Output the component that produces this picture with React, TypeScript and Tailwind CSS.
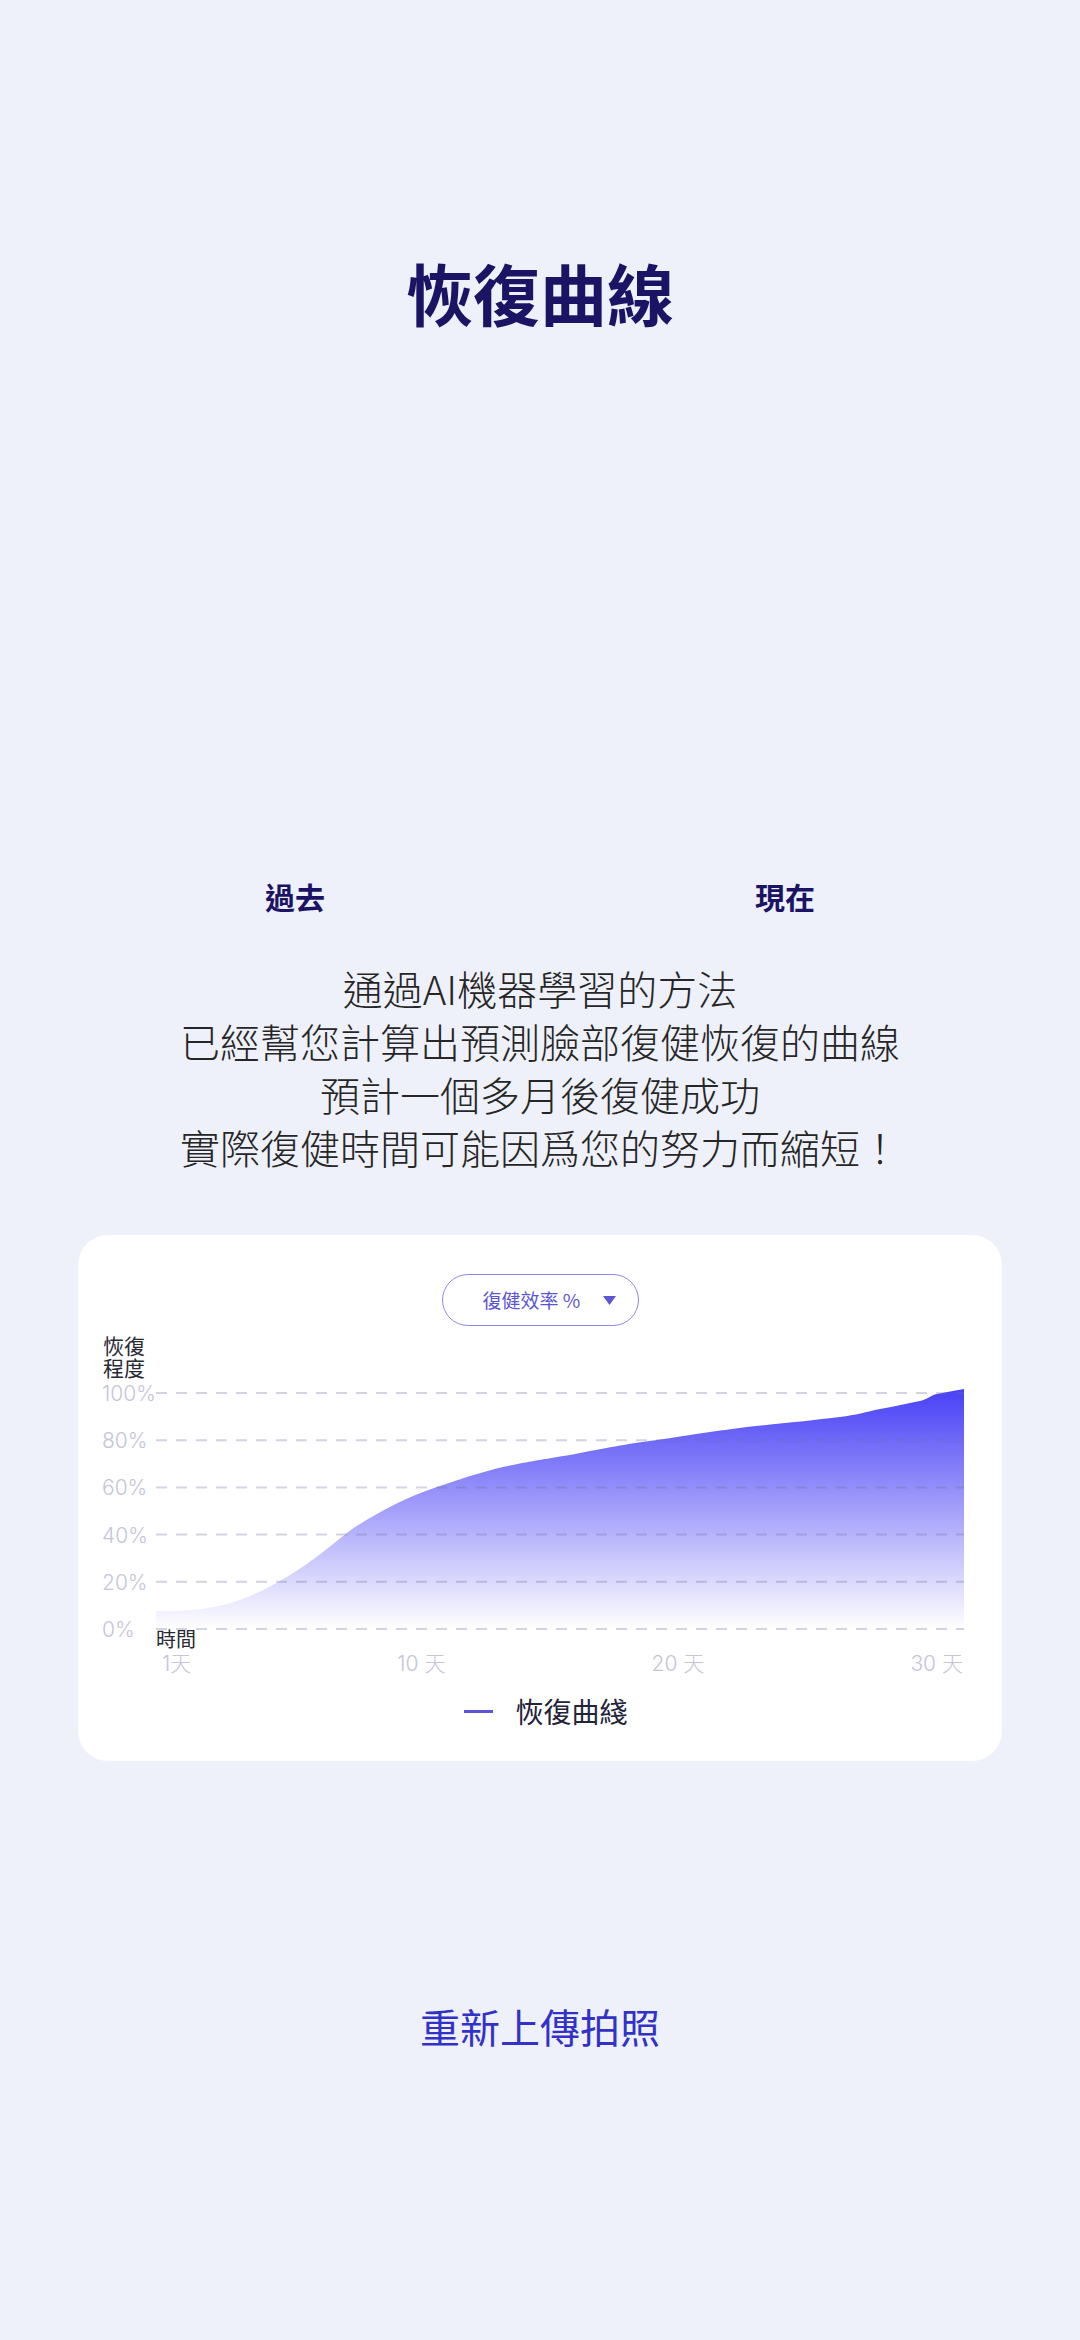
const cjk = "font-['Noto_Sans_CJK_TC','Noto_Sans',sans-serif]";
const latin = "font-['Inter','Noto_Sans_CJK_TC',sans-serif]";

const yLabels = ["100%", "80%", "60%", "40%", "20%", "0%"];
const xLabels = ["1天", "10 天", "20 天", "30 天"];

const areaPath =
  "M0 218 C30 218 55 217 81 208 C110 198 140 180 167 159 C185 145 195 136 204 131 C225 118 250 104 281 94 C310 84 330 78 347 74 C370 69 384 67 414 62 C450 55 470 51 501 47 C540 41 560 38 591 34 C630 30 650 28 684 24 C700 22 710 19 724 16 C740 13 750 11 764 8 C772 6 775 2 781 1 C790 -1 798 -2 808 -4 L808 236 L0 236 Z";

const RecoveryChart = () => {
  return (
    <div className="relative ml-[53px] h-[236px] w-[808px]">
      {yLabels.map((label, index) => (
        <span
          key={label}
          className={`absolute left-[-54px] -translate-y-1/2 text-[21px] leading-[22px] font-light text-[#c6c4d9] ${latin}`}
          style={{ top: `${index * 47.2 + 1}px` }}
        >
          {label}
        </span>
      ))}
      <svg width="808" height="236" viewBox="0 0 808 236" className="overflow-visible">
        <defs>
          <linearGradient id="fill" x1="0" y1="-4" x2="0" y2="236" gradientUnits="userSpaceOnUse">
            <stop offset="0" stopColor="#4840f6" />
            <stop offset="1" stopColor="#ffffff" />
          </linearGradient>
        </defs>
        <path d={areaPath} fill="url(#fill)" />
        {yLabels.map((_, index) => (
          <line
            key={index}
            x1="0"
            x2="808"
            y1={index * 47.2}
            y2={index * 47.2}
            stroke="rgba(110,108,160,0.3)"
            strokeWidth="2"
            strokeDasharray="11 9"
          />
        ))}
      </svg>
    </div>
  );
};

const App = () => {
  return (
    <div className={`min-h-[2340px] bg-[#eef1fa] flex flex-col ${cjk}`}>
      <h1 className="pt-[252px] text-center text-[67px] leading-[80px] font-bold text-[#1b1464]">
        恢復曲線
      </h1>

      <div className="h-[544px]"></div>

      <div className="flex px-[50px]">
        <div className="flex-1 text-center text-[30px] leading-[40px] font-bold text-[#1b1464]">過去</div>
        <div className="flex-1 text-center text-[30px] leading-[40px] font-bold text-[#1b1464]">現在</div>
      </div>

      <div className="mt-[46px] text-center text-[40px] leading-[53px] font-light text-[#262626]">
        <p>通過AI機器學習的方法</p>
        <p>已經幫您計算出預測臉部復健恢復的曲線</p>
        <p>預計一個多月後復健成功</p>
        <p>實際復健時間可能因爲您的努力而縮短！</p>
      </div>

      <div className="mx-[78px] mt-[61px] rounded-[30px] bg-white px-[25px] pt-[39px] pb-[32px]">
        <div className="flex justify-center">
          <button className="flex h-[52px] w-[197px] items-center justify-between rounded-full border border-[#8d88ea] pl-[40px] pr-[22px] text-[19px] text-[#5b55d6]">
            <span>復健效率 %</span>
            <svg width="13" height="9" viewBox="0 0 13 9">
              <path d="M0 0 H13 L6.5 9 Z" fill="#5b55d6" />
            </svg>
          </button>
        </div>

        <p className="mt-[8px] text-[21px] leading-[22px] text-[#2a2a35]">
          恢復
          <br />
          程度
        </p>

        <div className="mt-[15px]">
          <RecoveryChart />
        </div>

        <div className="ml-[53px] -mt-[2px] text-[20px] leading-[24px] text-[#2a2a35]">時間</div>

        <div className={`ml-[59px] flex w-[801px] justify-between text-[21px] leading-[26px] font-light text-[#c6c4d9] ${latin}`}>
          {xLabels.map((label) => (
            <span key={label}>{label}</span>
          ))}
        </div>

        <div className="mt-[16px] flex items-center justify-center gap-[22px] pl-[12px]">
          <div className="h-[3px] w-[29px] bg-[#5b55d6]"></div>
          <span className="text-[28px] leading-[36px] text-[#23233a]">恢復曲綫</span>
        </div>
      </div>

      <button className="mt-[237px] self-center text-[40px] leading-[56px] text-[#3232c8]">
        重新上傳拍照
      </button>
    </div>
  );
};

export default App;
